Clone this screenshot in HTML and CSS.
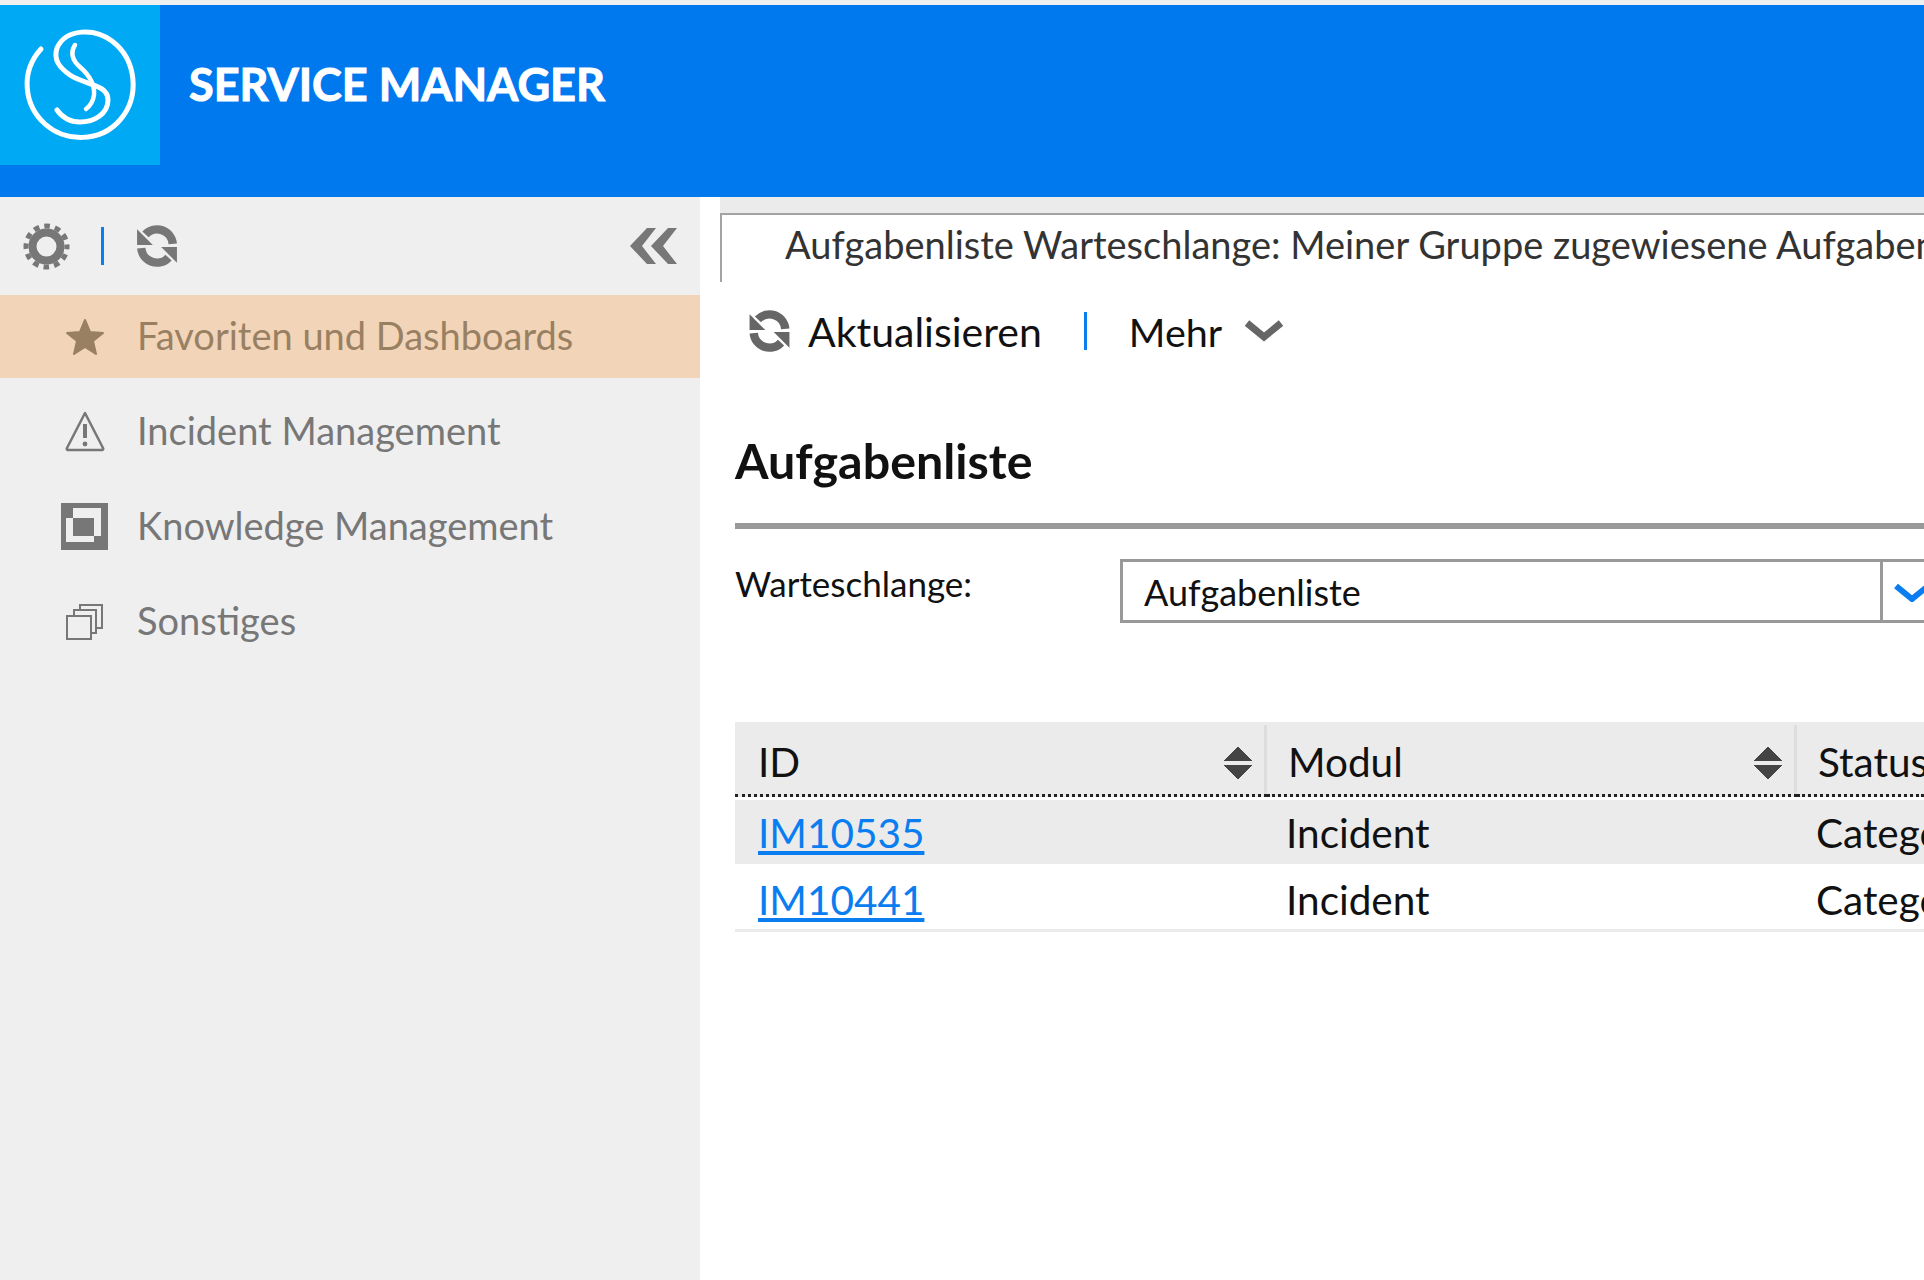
FILE: index.html
```html
<html>
  <head>
    <link rel="stylesheet" href="styles.css">
  </head>
  <body>
    <div class="app">
      <div class="header">
        <div class="logo">
          <svg width="160" height="160" viewBox="0 5 160 160" fill="none" stroke="#fff" stroke-linecap="round">
            <path stroke-width="5" d="M41 49C20 72 24 105 45 124C65 142 100 143 120 120C140 97 137 60 112 41C95 28 66 28 57 48C53 60 60 68 70 75C85 85 108 84 108 100C108 114 94 122 80 122C70 122 62 117 57 110"/>
            <path stroke-width="4.5" d="M75 45C70 53 72 60 80 67C88 74 95 84 94 95C93 102 90 106 86 109"/>
          </svg>
        </div>
        <div class="product">SERVICE MANAGER</div>
      </div>

      <div class="main">
        <div class="sidebar">
          <div class="side-tools">
            <svg class="gear" width="47" height="47" viewBox="0 0 47 47" fill="none" stroke="#777">
              <circle cx="23.5" cy="23.5" r="14" stroke-width="8"/>
              <circle cx="23.5" cy="23.5" r="20.5" stroke-width="5" stroke-dasharray="5.7 5.03" stroke-dashoffset="2.85"/>
            </svg>
            <span class="side-sep"></span>
            <svg class="refresh" width="44" height="42" viewBox="0 0 40 40" fill="#777">
              <path fill="none" stroke="#777" stroke-width="8" d="M35 18A15 15 0 0 0 9 9"/>
              <path fill="none" stroke="#777" stroke-width="8" d="M5 22A15 15 0 0 0 31 31"/>
              <polygon points="1,4 1,19 16,19"/>
              <polygon points="39,36 39,21 24,21"/>
            </svg>
            <svg class="collapse" width="47" height="36" viewBox="0 0 47 36" fill="#777">
              <polygon points="17,0 26,0 12,18 26,36 17,36 0,18"/>
              <polygon points="38,0 47,0 33,18 47,36 38,36 21,18"/>
            </svg>
          </div>
          <div class="nav-item active">
            <span class="nav-icon">
              <svg width="40" height="38" viewBox="0 0 40 38" fill="#9a8063">
                <polygon stroke="#9a8063" stroke-width="2" stroke-linejoin="round" points="20,2 25,14 38,15 28,23 31,36 20,29 9,36 12,23 2,15 15,14"/>
              </svg>
            </span>
            Favoriten und Dashboards
          </div>
          <div class="nav-item">
            <span class="nav-icon">
              <svg width="40" height="41" viewBox="0 0 40 41" fill="none" stroke="#777">
                <path stroke-width="2.5" stroke-linejoin="round" d="M20 2L38 37Q39 39 36 39H4Q1 39 2 37Z"/>
                <path stroke-width="4" d="M20 13V27"/>
                <circle cx="20" cy="33" r="2.4" fill="#777" stroke="none"/>
              </svg>
            </span>
            Incident Management
          </div>
          <div class="nav-item">
            <span class="nav-icon">
              <svg width="47" height="47" viewBox="0 0 47 47">
                <rect width="47" height="47" fill="#777"/>
                <polygon fill="#efefef" points="12,5 40,5 40,33 33,33 33,39 5,39 5,15 12,15"/>
                <rect x="12" y="15" width="21" height="18" fill="#777"/>
              </svg>
            </span>
            Knowledge Management
          </div>
          <div class="nav-item">
            <span class="nav-icon">
              <svg width="38" height="37" viewBox="0 0 38 37" fill="none" stroke="#777" stroke-width="2">
                <rect x="1" y="13" width="24" height="23"/>
                <path d="M8 13V7H30V30H25"/>
                <path d="M14 7V2H36V25H30"/>
              </svg>
            </span>
            Sonstiges
          </div>
        </div>

        <div class="content">
          <div class="tab-strip"></div>
          <div class="tab">Aufgabenliste Warteschlange: Meiner Gruppe zugewiesene Aufgaben</div>

          <div class="toolbar">
            <svg width="43" height="42" viewBox="0 0 40 40" fill="#666">
              <path fill="none" stroke="#666" stroke-width="8" d="M35 18A15 15 0 0 0 9 9"/>
              <path fill="none" stroke="#666" stroke-width="8" d="M5 22A15 15 0 0 0 31 31"/>
              <polygon points="1,4 1,19 16,19"/>
              <polygon points="39,36 39,21 24,21"/>
            </svg>
            <span class="tool-label">Aktualisieren</span>
            <span class="tool-sep"></span>
            <span class="tool-label more">Mehr</span>
            <svg class="tool-chevron" width="38" height="22" viewBox="0 0 38 22" fill="none" stroke="#666" stroke-width="7">
              <path d="M2 3L19 17L36 3"/>
            </svg>
          </div>

          <div class="panel">
            <h1>Aufgabenliste</h1>
            <div class="queue-row">
              <label>Warteschlange:</label>
              <div class="select">
                <span class="select-value">Aufgabenliste</span>
                <span class="select-btn">
                  <svg width="36" height="18" viewBox="0 0 36 18" fill="none" stroke="#0a7df0" stroke-width="6">
                    <path d="M2 2L18 15L34 2"/>
                  </svg>
                </span>
              </div>
            </div>

            <table class="list">
              <thead>
                <tr>
                  <th class="col-id"><div class="th-in">ID <span class="sort"></span></div></th>
                  <th class="col-mod"><div class="th-in">Modul <span class="sort"></span></div></th>
                  <th class="col-status"><div class="th-in">Status</div></th>
                </tr>
              </thead>
              <tbody>
                <tr class="odd">
                  <td><a href="#">IM10535</a></td>
                  <td class="cell-mod">Incident</td>
                  <td class="cell-status">Category</td>
                </tr>
                <tr>
                  <td><a href="#">IM10441</a></td>
                  <td class="cell-mod">Incident</td>
                  <td class="cell-status">Category</td>
                </tr>
              </tbody>
            </table>
          </div>
        </div>
      </div>
    </div>
  </body>
</html>
```

FILE: styles.css
```css
* {
  box-sizing: border-box;
  font-family: Lato, "Open Sans", sans-serif;
}

body {
  margin: 0;
  background-color: #fff;
}

.app {
  width: 1924px;
  height: 1280px;
  overflow: hidden;
  padding-top: 5px;
  background-color: #f0f0f0;
  display: flex;
  flex-direction: column;
}

/* top bar */
.header {
  height: 192px;
  flex: none;
  display: flex;
  align-items: flex-start;
  background-color: #0079ef;
}

.logo {
  width: 160px;
  height: 160px;
  background-color: #00a9f4;
}

.logo svg {
  display: block;
}

.product {
  margin-left: 29px;
  margin-top: 52px;
  font-size: 45px;
  line-height: 54px;
  font-weight: 700;
  color: #fff;
  -webkit-text-stroke: 1px #fff;
  white-space: nowrap;
}

.main {
  flex: 1;
  display: flex;
  min-height: 0;
}

/* left menu */
.sidebar {
  width: 700px;
  flex: none;
  background-color: #efefef;
}

.side-tools {
  height: 98px;
  display: flex;
  align-items: center;
  padding: 0 23px;
}

.side-sep {
  width: 3px;
  height: 38px;
  margin: 0 31px 0 31px;
  background-color: #0a7df0;
}

.collapse {
  margin-left: auto;
}

.nav-item {
  height: 83px;
  margin-bottom: 12px;
  padding-bottom: 4px;
  display: flex;
  align-items: center;
  font-size: 38px;
  color: #777;
  white-space: nowrap;
}

.nav-item.active {
  background-color: #f2d5b8;
  color: #9a8063;
}

.nav-icon {
  width: 137px;
  flex: none;
  display: flex;
  justify-content: center;
  padding: 0 29px 0 61px;
  margin-top: 4px;
}

/* right side */
.content {
  flex: 1;
  min-width: 0;
  overflow: hidden;
  background-color: #fff;
}

.tab-strip {
  height: 16px;
  margin-left: 20px;
  background-color: #ebebeb;
}

.tab {
  height: 69px;
  margin-left: 20px;
  padding-left: 63px;
  border-top: 2px solid #a3a3a3;
  border-left: 2px solid #a3a3a3;
  font-size: 38px;
  line-height: 59px;
  color: #333;
  white-space: nowrap;
}

.toolbar {
  display: flex;
  align-items: center;
  height: 98px;
  padding: 0 0 0 48px;
}

.tool-label {
  margin-left: 17px;
  font-size: 41px;
  color: #111;
}

.tool-label.more {
  margin-left: 0;
  font-size: 39.5px;
}

.tool-sep {
  width: 3px;
  height: 38px;
  margin-left: 42px;
  margin-right: 42px;
  background-color: #0a7df0;
}

.tool-chevron {
  margin-left: 23px;
}

.panel {
  padding-left: 35px;
}

h1 {
  margin: 0;
  padding-top: 51px;
  height: 149px;
  border-bottom: 6px solid #999;
  font-size: 48.4px;
  line-height: 58px;
  font-weight: 700;
  color: #111;
}

.queue-row {
  display: flex;
  margin-top: 30px;
}

.queue-row label {
  width: 385px;
  flex: none;
  font-size: 35px;
  line-height: 48px;
  color: #111;
}

.select {
  flex: 1;
  height: 64px;
  display: flex;
  border: 3px solid #999;
  border-right: none;
}

.select-value {
  width: 757px;
  padding-left: 21px;
  font-size: 36px;
  line-height: 61px;
  color: #111;
}

.select-btn {
  flex: 1;
  padding: 22px 0 0 11px;
  border-left: 3px solid #999;
}

.select-btn svg {
  display: block;
}

.list {
  width: 1189px;
  margin-top: 99px;
  table-layout: fixed;
  border-collapse: separate;
  border-spacing: 0;
  font-size: 40.5px;
  color: #111;
}

.list th {
  height: 75px;
  padding: 3px 0 0;
  background-color: #ebebeb;
  border-bottom: 3px dotted #222;
  font-weight: 400;
  text-align: left;
}

.col-id {
  width: 532px;
}

.col-mod {
  width: 530px;
}

.th-in {
  height: 69px;
  display: flex;
  align-items: center;
  justify-content: space-between;
  padding: 4px 12px 0 23px;
  border-right: 3px solid #ddd;
}

.col-mod .th-in {
  padding-left: 21px;
}

.col-status .th-in {
  border-right: none;
  padding-left: 21px;
}

.sort {
  width: 28px;
  height: 34px;
  flex: none;
  margin-top: 2px;
  background:
    linear-gradient(to bottom right, transparent 50%, #444 50%) left top / 14px 15px no-repeat,
    linear-gradient(to bottom left, transparent 50%, #444 50%) right top / 14px 15px no-repeat,
    linear-gradient(to top right, transparent 50%, #444 50%) left bottom / 14px 15px no-repeat,
    linear-gradient(to top left, transparent 50%, #444 50%) right bottom / 14px 15px no-repeat;
}

.list td {
  height: 68px;
  padding: 5px 0 0 23px;
  white-space: nowrap;
  overflow: hidden;
  border-bottom: 3px solid #ebebeb;
}

.list tr.odd td {
  height: 67px;
  padding-top: 0;
  background-color: #ebebeb;
  border-top: 3px solid #fff;
  border-bottom: none;
}

.list td.cell-mod {
  padding-left: 19px;
}

.list td.cell-status {
  padding-left: 19px;
}

.list a {
  color: #0a7df0;
}
```
